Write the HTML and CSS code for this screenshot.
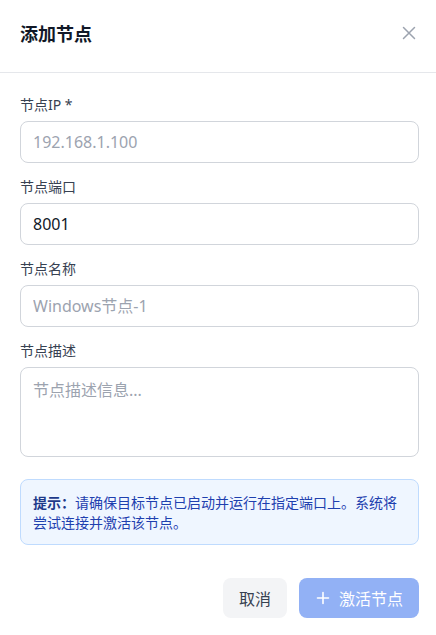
FILE: index.html
```html
<!DOCTYPE html>
<html lang="zh-CN">
<head>
<meta charset="utf-8">
<title>添加节点</title>
<link rel="stylesheet" href="styles.css">
</head>
<body>
<div class="modal">
  <div class="modal-header">
    <h2 class="modal-title">添加节点</h2>
    <button class="close-btn" type="button" aria-label="关闭">
      <svg width="16" height="16" viewBox="0 0 16 16" fill="none" stroke="currentColor" stroke-width="1.5" stroke-linecap="round"><path d="M2.5 2.5l11 11M13.5 2.5l-11 11"/></svg>
    </button>
  </div>
  <div class="modal-body">
    <div class="form">
      <div class="field">
        <label class="label">节点IP *</label>
        <input class="input" type="text" placeholder="192.168.1.100">
      </div>
      <div class="field">
        <label class="label">节点端口</label>
        <input class="input" type="text" value="8001">
      </div>
      <div class="field">
        <label class="label">节点名称</label>
        <input class="input" type="text" placeholder="Windows节点-1">
      </div>
      <div class="field">
        <label class="label">节点描述</label>
        <textarea class="textarea" placeholder="节点描述信息..."></textarea>
      </div>
    </div>
    <div class="notice"><strong>提示：</strong>请确保目标节点已启动并运行在指定端口上。系统将尝试连接并激活该节点。</div>
  </div>
  <div class="modal-footer">
    <button class="btn btn-cancel" type="button">取消</button>
    <button class="btn btn-primary" type="button">
      <svg width="16" height="16" viewBox="0 0 16 16" fill="none" stroke="currentColor" stroke-width="1.6" stroke-linecap="round"><path d="M8 2.5v11M2.5 8h11"/></svg>
      <span>激活节点</span>
    </button>
  </div>
</div>
</body>
</html>
```

FILE: styles.css
```css
* { box-sizing: border-box; }
html, body {
  margin: 0;
  padding: 0;
  background: #ffffff;
}
body {
  font-family: "Noto Sans", "Noto Sans CJK SC", sans-serif;
  color: #111827;
}
.modal {
  width: 436px;
  height: 635px;
  background: #fff;
}
.modal-header {
  display: flex;
  align-items: center;
  justify-content: space-between;
  padding: 20px 17px 24px 20px;
  border-bottom: 1px solid #e5e7eb;
}
.modal-title {
  margin: 0;
  font-size: 18px;
  line-height: 28px;
  font-weight: 700;
  color: #111827;
}
.close-btn {
  border: 0;
  background: transparent;
  padding: 0;
  width: 16px;
  height: 16px;
  margin-right: 2px;
  margin-top: -2px;
  color: #9ca3af;
  display: flex;
}
.modal-body {
  padding: 20px 17px 0 20px;
}
.form {
  display: flex;
  flex-direction: column;
  gap: 12px;
}
.field {
  display: flex;
  flex-direction: column;
}
.label {
  font-size: 14px;
  line-height: 22px;
  padding-top: 1px;
  color: #374151;
  margin-bottom: 5px;
}
.input, .textarea {
  width: 100%;
  border: 1px solid #d1d5db;
  border-radius: 8px;
  font-family: "Noto Sans", "Noto Sans CJK SC", sans-serif;
  font-size: 16px;
  color: #111827;
  background: #fff;
  outline: none;
}
.input {
  display: block;
  height: 42px;
  padding: 0 12px;
}
.textarea {
  display: block;
  height: 90px;
  padding: 10px 12px;
  line-height: 24px;
  resize: none;
}
.input::placeholder, .textarea::placeholder {
  color: #9ca3af;
}
.notice {
  margin-top: 22px;
  padding: 12px;
  background: #eff6ff;
  border: 1px solid #bfdbfe;
  border-radius: 8px;
  font-family: "Noto Sans CJK SC", sans-serif;
  font-size: 14px;
  line-height: 20px;
  color: #1e40af;
}
.notice strong {
  font-weight: 700;
  color: #1e3a8a;
}
.modal-footer {
  display: flex;
  justify-content: flex-end;
  gap: 12px;
  padding: 33px 17px 18px 20px;
}
.btn {
  height: 40px;
  border: 0;
  border-radius: 8px;
  padding: 0 16px;
  font-family: "Noto Sans", "Noto Sans CJK SC", sans-serif;
  font-size: 16px;
  display: flex;
  align-items: center;
  gap: 8px;
}
.btn-cancel {
  background: #f3f4f6;
  color: #374151;
}
.btn-primary {
  background: #92b1f5;
  color: #fff;
}
```
